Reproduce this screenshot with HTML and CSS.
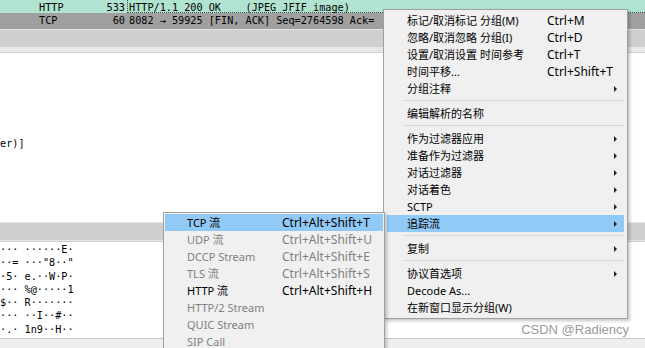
FILE: index.html
```html
<!DOCTYPE html>
<html lang="zh-CN">
<head>
  <meta charset="UTF-8" />
  <meta name="viewport" content="width=device-width, initial-scale=1" />
  <title>Wireshark - 追踪流</title>
  <link rel="stylesheet" href="styles.css">
</head>
<body>

  <div class="packet-list">
    <div class="pkt http">
      <span class="proto">HTTP</span>
      <span class="len">533</span>
      <span class="info focus">HTTP/1.1 200 OK    (JPEG JFIF image)</span>
    </div>
    <div class="pkt tcp">
      <span class="proto">TCP</span>
      <span class="len">60</span>
      <span class="info">8082 → 59925 [FIN, ACK] Seq=2764598 Ack=</span>
    </div>
  </div>
  <div class="hscroll"></div>
  <div class="splitter"></div>

  <div class="details">
    <div class="tree-line">er)]</div>
  </div>
  <div class="hscroll"></div>
  <div class="splitter thin"></div>

  <div class="bytes">
    <div class="hex-line">··· ······E·</div>
    <div class="hex-line">··= ···"8··"</div>
    <div class="hex-line">·5· e.··W·P·</div>
    <div class="hex-line">··· %@·····1</div>
    <div class="hex-line">$·· R·······</div>
    <div class="hex-line">··· ··I··#··</div>
    <div class="hex-line">·.· 1n9··H··</div>
  </div>

  <div class="status"></div>

  <!-- 右键菜单 -->
  <div class="menu main-menu">
    <div class="item"><span class="label">标记/取消标记 分组(M)</span><span class="key">Ctrl+M</span></div>
    <div class="item"><span class="label">忽略/取消忽略 分组(I)</span><span class="key">Ctrl+D</span></div>
    <div class="item"><span class="label">设置/取消设置 时间参考</span><span class="key">Ctrl+T</span></div>
    <div class="item"><span class="label">时间平移...</span><span class="key">Ctrl+Shift+T</span></div>
    <div class="item"><span class="label">分组注释</span><span class="arrow"></span></div>
    <div class="sep"></div>
    <div class="item"><span class="label">编辑解析的名称</span></div>
    <div class="sep"></div>
    <div class="item"><span class="label">作为过滤器应用</span><span class="arrow"></span></div>
    <div class="item"><span class="label">准备作为过滤器</span><span class="arrow"></span></div>
    <div class="item"><span class="label">对话过滤器</span><span class="arrow"></span></div>
    <div class="item"><span class="label">对话着色</span><span class="arrow"></span></div>
    <div class="item"><span class="label">SCTP</span><span class="arrow"></span></div>
    <div class="item active"><span class="label">追踪流</span><span class="arrow"></span></div>
    <div class="sep"></div>
    <div class="item"><span class="label">复制</span><span class="arrow"></span></div>
    <div class="sep"></div>
    <div class="item"><span class="label">协议首选项</span><span class="arrow"></span></div>
    <div class="item"><span class="label">Decode As...</span></div>
    <div class="item"><span class="label">在新窗口显示分组(W)</span></div>
  </div>

  <!-- 追踪流 子菜单 -->
  <div class="menu sub-menu">
    <div class="item active"><span class="label">TCP 流</span><span class="key">Ctrl+Alt+Shift+T</span></div>
    <div class="item disabled"><span class="label">UDP 流</span><span class="key">Ctrl+Alt+Shift+U</span></div>
    <div class="item disabled"><span class="label">DCCP Stream</span><span class="key">Ctrl+Alt+Shift+E</span></div>
    <div class="item disabled"><span class="label">TLS 流</span><span class="key">Ctrl+Alt+Shift+S</span></div>
    <div class="item"><span class="label">HTTP 流</span><span class="key">Ctrl+Alt+Shift+H</span></div>
    <div class="item disabled"><span class="label">HTTP/2 Stream</span></div>
    <div class="item disabled"><span class="label">QUIC Stream</span></div>
    <div class="item disabled"><span class="label">SIP Call</span></div>
  </div>

  <div class="watermark">CSDN @Radiency</div>

</body>
</html>
```

FILE: styles.css
```css
body {
  margin: 0;
  width: 645px;
  height: 348px;
  overflow: hidden;
  position: relative;
  display: flex;
  flex-direction: column;
  background: #fff;
  color: #000;
  font-family: "DejaVu Sans Mono", monospace;
  font-size: 10.2px;
}

.packet-list {
  flex: none;
}

.pkt {
  display: flex;
  white-space: pre;
  overflow: hidden;
}

.pkt.http {
  height: 13px;
  line-height: 15px;
  background: #b0e4d0;
}

.pkt.tcp {
  height: 16px;
  line-height: 16px;
  background: #a0a0a0;
}

.proto {
  width: 60px;
  padding-left: 39px;
  flex: none;
}

.len {
  width: 26px;
  text-align: right;
  flex: none;
}

.info {
  margin-left: 2px;
  padding-left: 2px;
  flex: 1;
}

.info.focus {
  border-left: 1px dotted #444;
  border-bottom: 1px dotted #444;
  padding-left: 1px;
}

.hscroll {
  flex: none;
  height: 17px;
  background: #cfcfcf;
  border-top: 1px solid #e6e6e6;
}

.splitter {
  flex: none;
  height: 5px;
  background: #e8e8e8;
  border-bottom: 1px solid #cfcfcf;
}

.splitter.thin {
  height: 1px;
}

.details {
  flex: none;
  height: 169px;
  overflow: hidden;
}

.tree-line {
  margin-top: 84px;
  line-height: 13px;
  white-space: pre;
}

.bytes {
  flex: none;
  height: 96px;
  padding-top: 1px;
  box-sizing: border-box;
  overflow: hidden;
}

.hex-line {
  line-height: 13.3px;
  white-space: pre;
}

.status {
  flex: 1;
  background: #efefef;
  border-top: 1px solid #c6c6c6;
}

.menu {
  position: absolute;
  background: #f0f0f0;
  border: 1px solid #a0a0a0;
  box-shadow: 2px 2px 3px rgba(0, 0, 0, 0.22);
  font-family: "Noto Sans", "Noto Sans CJK SC", sans-serif;
  font-size: 11px;
  color: #000;
}

.main-menu {
  left: 383px;
  top: 9px;
  width: 237px;
  padding: 2px 3px;
}

.sub-menu {
  left: 163px;
  top: 212px;
  width: 218px;
  padding: 1px;
  z-index: 2;
}

.item {
  display: flex;
  align-items: center;
  height: 17px;
  line-height: 17px;
  padding-left: 20px;
  white-space: nowrap;
}

.main-menu .label {
  width: 140px;
  flex: none;
}

.sub-menu .item {
  padding-left: 22px;
}

.sub-menu .label {
  width: 95px;
  flex: none;
}

.key {
  font-size: 12px;
}

.arrow {
  margin-left: auto;
  margin-right: 7px;
  width: 0;
  height: 0;
  border-left: 3px solid #222;
  border-top: 3px solid transparent;
  border-bottom: 3px solid transparent;
}

.item.active {
  background: #91c9f7;
}

.item.disabled {
  color: #808080;
}

.sep {
  height: 1px;
  background: #d7d7d7;
  margin: 3px 0 4px 16px;
}

.watermark {
  position: absolute;
  right: 16px;
  top: 322px;
  font-family: "Liberation Sans", Arial, sans-serif;
  font-size: 13px;
  line-height: 15px;
  color: #9a9a9a;
}
```
